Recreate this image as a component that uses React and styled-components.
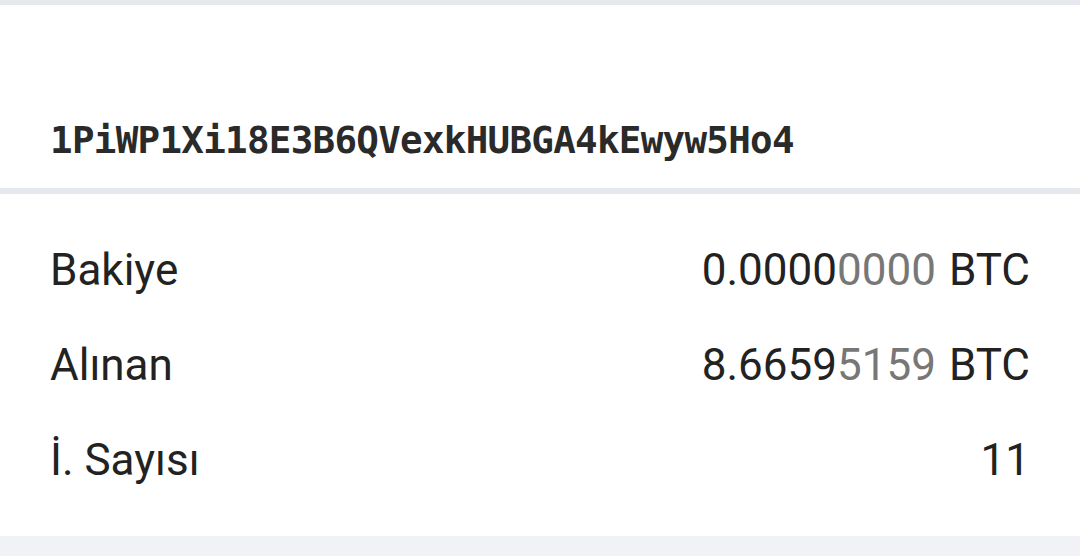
import React from 'react'
import styled, { createGlobalStyle } from 'styled-components'

const GlobalStyle = createGlobalStyle`
    html, body {
        margin: 0;
        padding: 0;
        background: #f1f2f6;
    }
    body {
        font-family: Roboto, 'Liberation Sans', sans-serif;
        color: #222;
    }
`

const rows = [
    { label: 'Bakiye', strong: '0.0000', faint: '0000', unit: 'BTC' },
    { label: 'Alınan', strong: '8.6659', faint: '5159', unit: 'BTC' },
    { label: 'İ. Sayısı', strong: '11', faint: '', unit: '' },
]

const App = () => {
    return (
        <>
            <GlobalStyle />
            <Wrapper>
                <AddressCard>
                    <Address>1PiWP1Xi18E3B6QVexkHUBGA4kEwyw5Ho4</Address>
                </AddressCard>
                <StatsCard>
                    {rows.map((row) => (
                        <Row key={row.label}>
                            <Label>{row.label}</Label>
                            <Value>
                                {row.strong}
                                {row.faint && <Faint>{row.faint}</Faint>}
                                {row.unit && <Unit>{row.unit}</Unit>}
                            </Value>
                        </Row>
                    ))}
                </StatsCard>
            </Wrapper>
        </>
    )
}

const Wrapper = styled.main`
    display: flex;
    flex-direction: column;
    min-height: 556px;
    border-top: 5px solid #e5e8ec;
    box-sizing: border-box;
    background: #f1f2f6;
`

const AddressCard = styled.section`
    height: 189px;
    display: flex;
    align-items: flex-end;
    padding: 0 50px 29px;
    box-sizing: border-box;
    background: #fff;
    border-bottom: 6px solid #e5e8ec;
`

const Address = styled.div`
    font-family: 'DejaVu Sans Mono', 'Liberation Mono', monospace;
    font-weight: bold;
    font-size: 37.5px;
    letter-spacing: -0.7px;
    line-height: 38px;
    color: #2a2a2a;
`

const StatsCard = styled.section`
    height: 342px;
    box-sizing: border-box;
    padding: 28px 50px 0;
    background: #fff;
`

const Row = styled.div`
    height: 95px;
    display: flex;
    align-items: center;
    justify-content: space-between;
    font-size: 44px;
    line-height: 1;
`

const Label = styled.span`
    color: #222;
`

const Value = styled.span`
    color: #222;
    white-space: nowrap;
`

const Faint = styled.span`
    color: #777;
`

const Unit = styled.span`
    margin-left: 13px;
`

export default App
